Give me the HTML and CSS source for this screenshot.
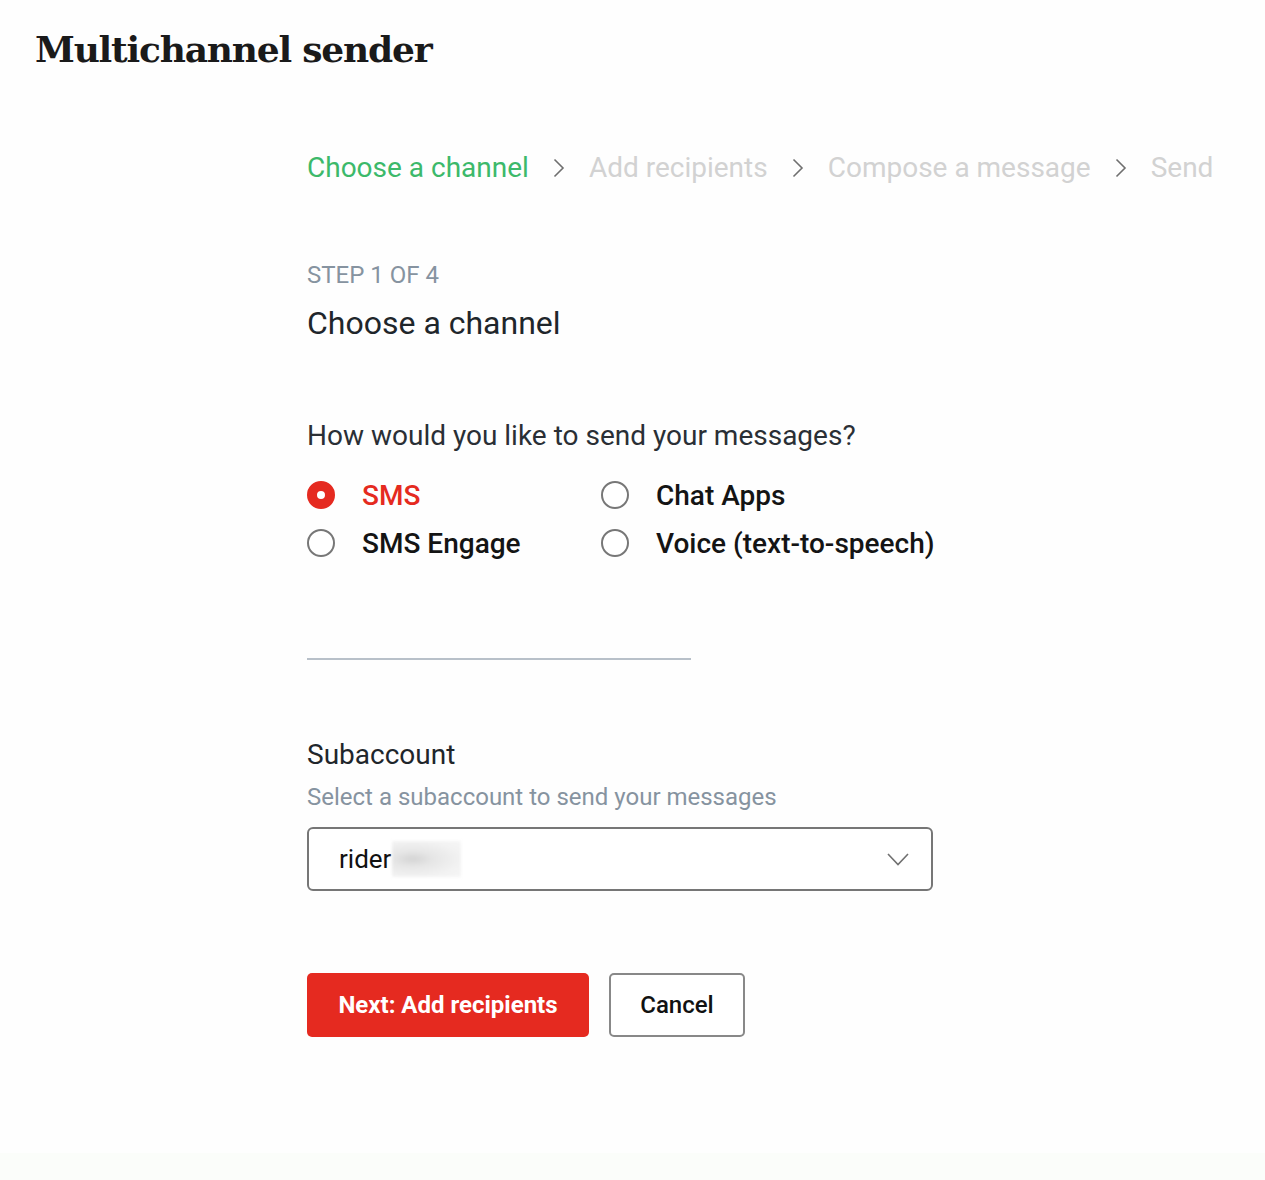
FILE: index.html
```html
<!DOCTYPE html>
<html lang="en">
<head>
<meta charset="utf-8">
<title>Multichannel sender</title>
<link rel="stylesheet" href="styles.css">
</head>
<body>
<div class="page">
  <h1 class="title">Multichannel sender</h1>
  <div class="content">
    <nav class="crumbs">
      <span class="crumb active">Choose a channel</span>
      <svg class="chev" viewBox="0 0 12 20" width="12" height="20"><path d="M1.5 1.5 L10 10 L1.5 18.5" fill="none" stroke="#6f6f6f" stroke-width="1.6"/></svg>
      <span class="crumb">Add recipients</span>
      <svg class="chev" viewBox="0 0 12 20" width="12" height="20"><path d="M1.5 1.5 L10 10 L1.5 18.5" fill="none" stroke="#6f6f6f" stroke-width="1.6"/></svg>
      <span class="crumb">Compose a message</span>
      <svg class="chev" viewBox="0 0 12 20" width="12" height="20"><path d="M1.5 1.5 L10 10 L1.5 18.5" fill="none" stroke="#6f6f6f" stroke-width="1.6"/></svg>
      <span class="crumb">Send</span>
    </nav>

    <div class="step">STEP 1 OF 4</div>
    <h2 class="heading">Choose a channel</h2>

    <p class="question">How would you like to send your messages?</p>
    <div class="options">
      <label class="option selected"><span class="radio"></span><span class="opt-label">SMS</span></label>
      <label class="option"><span class="radio"></span><span class="opt-label">Chat Apps</span></label>
      <label class="option"><span class="radio"></span><span class="opt-label">SMS Engage</span></label>
      <label class="option"><span class="radio"></span><span class="opt-label">Voice (text-to-speech)</span></label>
    </div>

    <hr class="divider">

    <div class="field-label">Subaccount</div>
    <div class="field-help">Select a subaccount to send your messages</div>
    <div class="select">
      <span class="select-value">rider<span class="blur"></span></span>
      <svg class="select-chev" viewBox="0 0 22 13" width="22" height="13"><path d="M1 1 L11 11.5 L21 1" fill="none" stroke="#707070" stroke-width="1.6"/></svg>
    </div>

    <div class="actions">
      <button class="btn btn-primary">Next: Add recipients</button>
      <button class="btn btn-secondary">Cancel</button>
    </div>
  </div>
  <div class="footer-tint"></div>
</div>
</body>
</html>
```
FILE: styles.css
```css
* { box-sizing: border-box; }
html, body { margin: 0; padding: 0; background: #fefefe; }
body { font-family: Roboto, "Noto Sans", Arial, sans-serif; color: #1f262b; }
.page { width: 1265px; height: 1180px; position: relative; }
.title {
  margin: 0;
  padding: 26px 0 0 35px;
  font-family: "DejaVu Serif", "Liberation Serif", serif;
  font-weight: 700;
  font-size: 36px;
  line-height: 46px;
  color: #1a1a1a;
  letter-spacing: -1.2px;
}
.content { padding-left: 307px; }
.crumbs {
  display: flex;
  align-items: center;
  margin-top: 75px;
  height: 42px;
}
.crumb { font-size: 28px; color: #d2d2d2; line-height: 42px; }
.crumb.active { color: #3cb96a; }
.chev { margin: 0 24px 0 24px; }
.step {
  margin-top: 72px;
  font-size: 24px;
  line-height: 28px;
  color: #8693a0;
}
.heading {
  margin: 15px 0 0;
  font-weight: 400;
  font-size: 32px;
  line-height: 38px;
  color: #1f262b;
}
.question {
  margin: 78px 0 0;
  font-size: 28px;
  line-height: 32px;
  color: #2a2f35;
}
.options {
  display: grid;
  grid-template-columns: 294px auto;
  row-gap: 14px;
  margin-top: 26px;
  width: 700px;
}
.option { display: flex; align-items: center; height: 34px; cursor: pointer; }
.radio {
  width: 28px; height: 28px;
  border-radius: 50%;
  border: 2px solid #777;
  background: #fff;
  flex: none;
}
.option.selected .radio { border: 10px solid #e52a20; }
.opt-label { margin-left: 27px; font-size: 28px; font-weight: 500; color: #141414; }
.option.selected .opt-label { color: #e52a20; }
.divider {
  margin: 98px 0 0;
  width: 384px;
  border: 0;
  height: 2px;
  background: #b8c0c9;
}
.field-label { margin-top: 78px; font-size: 28px; line-height: 34px; color: #1f262b; }
.field-help { margin-top: 10px; font-size: 24px; line-height: 30px; color: #8693a0; }
.select {
  margin-top: 15px;
  width: 626px; height: 64px;
  border: 2px solid #767676;
  border-radius: 6px;
  display: flex;
  align-items: center;
  justify-content: space-between;
  padding: 0 22px 0 30px;
  background: #fff;
}
.select-value { font-size: 26px; color: #111; display: flex; align-items: center; }
.blur {
  display: inline-block;
  width: 69px; height: 36px;
  margin-left: 1px;
  background: radial-gradient(ellipse at 30% 50%, #d4d4d4 0, #e6e6e6 30%, #f2f2f2 70%, #f6f6f6 100%);
  filter: blur(1.5px);
}
.actions { display: flex; gap: 20px; margin-top: 82px; }
.btn {
  height: 64px;
  font-family: Roboto, "Noto Sans", Arial, sans-serif;
  font-size: 24px;
  font-weight: 700;
  border-radius: 5px;
  cursor: pointer;
}
.btn-primary { width: 282px; background: #e52a20; color: #fff; border: 0; }
.btn-secondary { width: 136px; background: #fff; color: #111; border: 2px solid #888; font-weight: 500; }
.footer-tint { position: absolute; left: 0; right: 0; bottom: 0; height: 27px; background: #fbfdfa; }
```
